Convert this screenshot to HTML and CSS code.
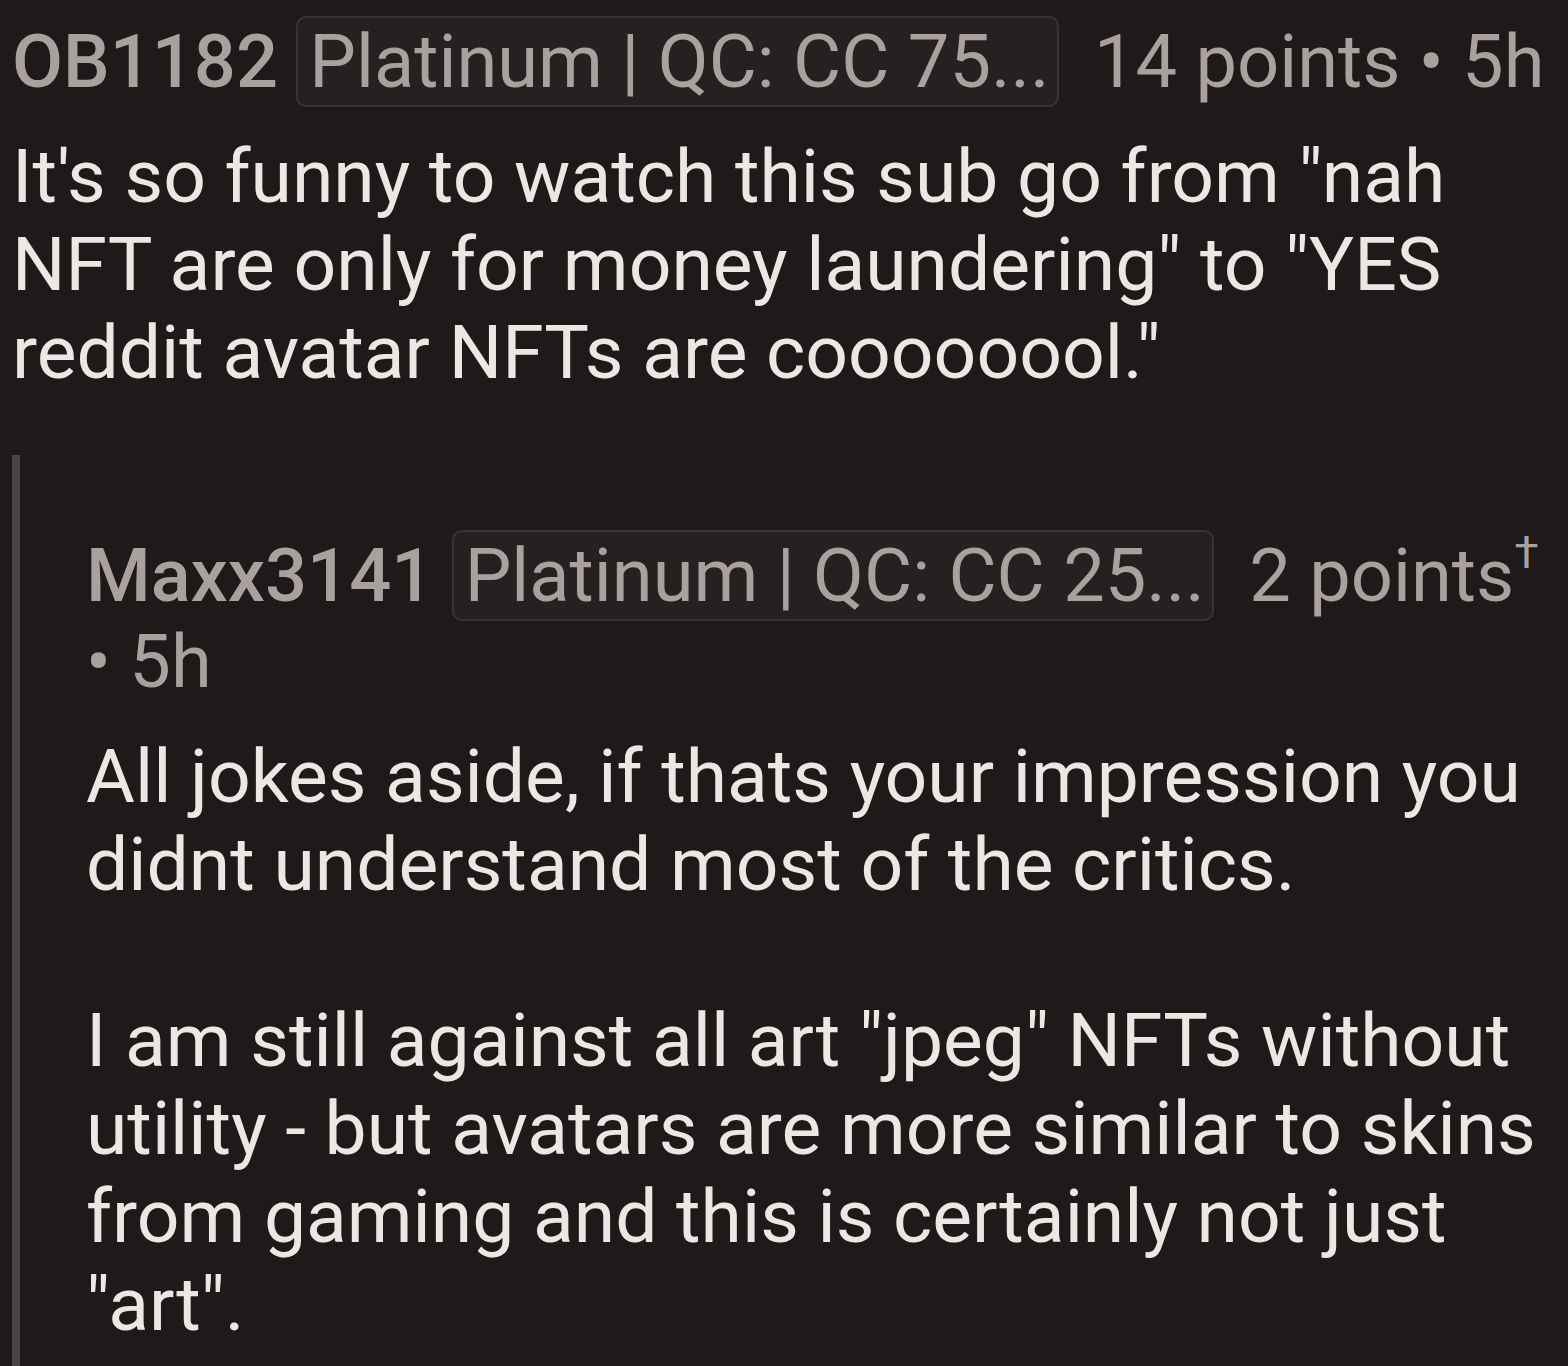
FILE: index.html
```html
<!DOCTYPE html>
<html lang="en">
<head>
    <meta charset="UTF-8">
    <meta name="viewport" content="width=device-width, initial-scale=1.0">
    <title>Comments</title>
    <link rel="stylesheet" href="styles.css">
</head>
<body>
    <div class="comment">
        <div class="meta">
            <span class="author">OB1182</span>
            <span class="flair">Platinum | QC: CC 75...</span>
            <span class="score">14 points • 5h</span>
        </div>
        <div class="text">
            <p>It's so funny to watch this sub go from "nah NFT are only for money laundering" to "YES reddit avatar NFTs are coooooool."</p>
        </div>

        <div class="comment reply">
            <div class="meta">
                <span class="author">Maxx3141</span>
                <span class="flair">Platinum | QC: CC 25...</span>
                <span class="score">2 points<sup>†</sup> • 5h</span>
            </div>
            <div class="text">
                <p>All jokes aside, if thats your impression you didnt understand most of the critics.</p>
                <p>I am still against all art "jpeg" NFTs without utility - but avatars are more similar to skins from gaming and this is certainly not just "art".</p>
            </div>
        </div>
    </div>
</body>
</html>
```

FILE: styles.css
```css
html, body {
    margin: 0;
    padding: 0;
    background-color: #1d1a19;
}

body {
    font-family: Roboto, "Noto Sans", sans-serif;
    font-size: 75px;
    color: #ebe7e5;
    padding-top: 19px;
    height: 1366px;
    box-sizing: border-box;
    overflow: hidden;
}

.comment {
    padding-left: 12px;
}

.meta {
    font-size: 74px;
    line-height: 86px;
    color: #a9a1a0;
}

.author {
    font-weight: 500;
}

.flair {
    background: #252120;
    border: 2px solid #393433;
    border-radius: 10px;
    padding: 0 7px 0 11px;
    margin-right: 17px;
}

.score sup {
    font-size: 0.6em;
    line-height: 0;
    vertical-align: 0.75em;
}

.text {
    margin-top: 27px;
    line-height: 88px;
}

.text p {
    margin: 0 0 88px;
}

.text p:last-child {
    margin-bottom: 0;
}

/* nested reply with thread line */
.reply {
    box-sizing: border-box;
    margin-top: 59px;
    padding: 78px 0 0 66px;
    border-left: 8px solid #4a4646;
    min-height: 911px;
}
```
